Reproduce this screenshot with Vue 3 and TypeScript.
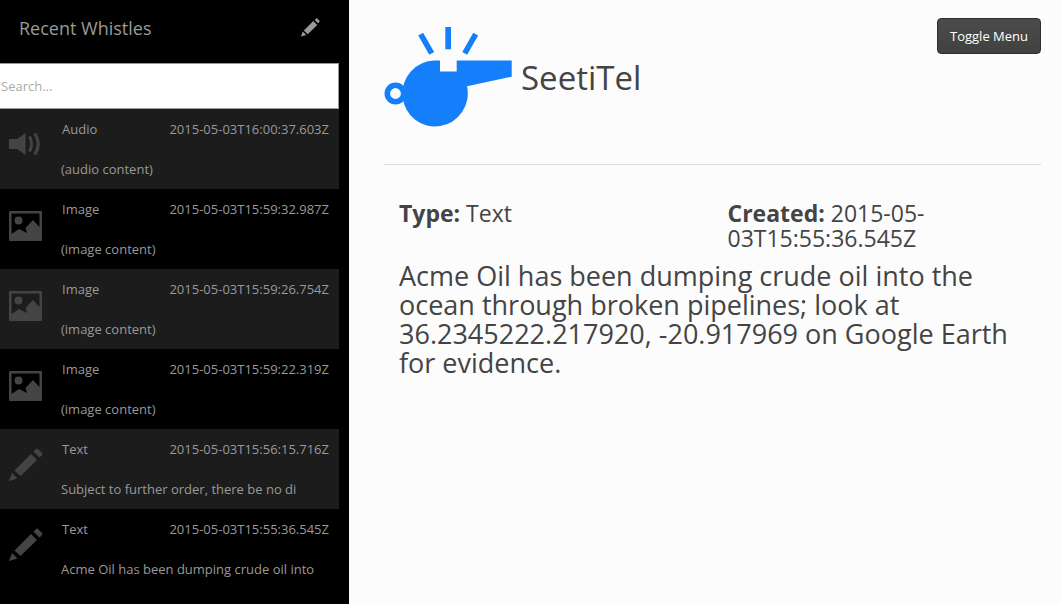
<script setup lang="ts">
import { ref, computed } from 'vue'

type Kind = 'Audio' | 'Image' | 'Text'
interface Whistle {
  kind: Kind
  created: string
  summary: string
}

const whistles: Whistle[] = [
  { kind: 'Audio', created: '2015-05-03T16:00:37.603Z', summary: '(audio content)' },
  { kind: 'Image', created: '2015-05-03T15:59:32.987Z', summary: '(image content)' },
  { kind: 'Image', created: '2015-05-03T15:59:26.754Z', summary: '(image content)' },
  { kind: 'Image', created: '2015-05-03T15:59:22.319Z', summary: '(image content)' },
  { kind: 'Text', created: '2015-05-03T15:56:15.716Z', summary: 'Subject to further order, there be no di' },
  { kind: 'Text', created: '2015-05-03T15:55:36.545Z', summary: 'Acme Oil has been dumping crude oil into' },
]

const query = ref('')
const menuOpen = ref(true)

const visible = computed(() => {
  const q = query.value.toLowerCase()
  return whistles.filter((w) => (w.kind + w.created + w.summary).toLowerCase().includes(q))
})
</script>

<template>
  <div class="page">
    <aside v-if="menuOpen" class="sidebar">
      <header class="sidebar-head">
        <h2>Recent Whistles</h2>
        <button type="button" class="compose" aria-label="New whistle">
          <svg viewBox="0 0 34 34" width="19" height="19" aria-hidden="true">
            <path d="M0 33 3 24l6.500 6.500zM5 22.500 22 5.500l7 7L12 29zM24.500 3.500 27 1q1-1 2 0l4 4q1 1 0 2L30.500 9.500z" />
          </svg>
        </button>
      </header>
      <input v-model="query" class="search" type="text" placeholder="Search..." aria-label="Search" />
      <ul class="list">
        <li v-for="w in visible" :key="w.created">
          <a href="#" class="item">
            <svg class="icon" viewBox="0 0 34 34" width="34" height="34" aria-hidden="true">
              <template v-if="w.kind === 'Audio'">
                <path d="M0 11h8l8.500-6v22l-8.500-6H0z" />
                <path class="wave" d="M20.500 8.500q4 7.500 0 15M25.500 5.500q7.500 10.500 0 21" />
              </template>
              <path
                v-else-if="w.kind === 'Image'"
                fill-rule="evenodd"
                d="M1 3h31q1 0 1 1v28q0 1-1 1H1q-1 0-1-1V4q0-1 1-1zM2.500 5.500V26l7.500-5 6 3 2 1-1.500-5L24 12l6.500 7V5.500zM9.500 8.500a4 4 0 1 1 0 8 4 4 0 0 1 0-8z"
              />
              <path
                v-else
                d="M0 33 3 25l5.500 5.500zM5.500 22.500 22 6l6 6L11.500 28zM24.500 3.500 27 1q1-1 2 0l4 4q1 1 0 2L30.500 9.500z"
              />
            </svg>
            <span class="body">
              <span class="meta">
                <span>{{ w.kind }}</span>
                <time>{{ w.created }}</time>
              </span>
              <span class="summary">{{ w.summary }}</span>
            </span>
          </a>
        </li>
      </ul>
    </aside>

    <main class="main">
      <header class="main-head">
        <div class="brand">
          <svg viewBox="0 0 128 100" width="128" height="100" aria-hidden="true">
            <g fill="#157efb">
              <path d="M50.500 33.500H56v11h16.700v-11h55v16.200L83 59.300A32.700 33 0 1 1 50.500 33.500z" />
              <path d="M61.300 0H67v22.300h-5.700z" />
            </g>
            <g fill="none" stroke="#157efb" stroke-width="5.600">
              <circle cx="11.500" cy="66.500" r="8.200" />
              <path d="M36.700 7.200 47.700 26.300M91.700 7.200 80.700 26.300" />
            </g>
          </svg>
          <h1>SeetiTel</h1>
        </div>
        <button type="button" class="toggle" @click="menuOpen = !menuOpen">Toggle Menu</button>
      </header>
      <section class="detail">
        <div class="facts">
          <h3><strong>Type:</strong> Text</h3>
          <h3><strong>Created:</strong> 2015-05-03T15:55:36.545Z</h3>
        </div>
        <p class="content">
          Acme Oil has been dumping crude oil into the ocean through broken pipelines; look at
          36.2345222.217920, -20.917969 on Google Earth for evidence.
        </p>
      </section>
    </main>
  </div>
</template>

<style>
body {
  margin: 0;
  background: #fcfcfc;
}
</style>

<style scoped>
* {
  box-sizing: border-box;
}
.page {
  display: flex;
  min-height: 100vh;
  font-family: 'Open Sans', 'Liberation Sans', sans-serif;
  font-size: 13px;
  color: #444;
}
h1,
h2,
h3,
p,
ul {
  margin: 0;
  padding: 0;
  font-weight: 400;
}
.sidebar {
  flex: 0 0 349px;
  padding-right: 10px;
  background: #000;
  color: #999;
}
.sidebar-head {
  display: flex;
  align-items: center;
  justify-content: space-between;
  height: 63px;
  padding: 0 19px 8px;
}
.sidebar-head h2 {
  font-size: 18px;
  line-height: 24px;
}
.compose {
  display: flex;
  padding: 0;
  border: 0;
  background: none;
  color: inherit;
  cursor: pointer;
}
.compose svg {
  fill: currentColor;
}
.search {
  display: block;
  width: 100%;
  height: 46px;
  padding: 0 1px;
  border: 1px solid #999;
  border-left: 0;
  border-radius: 0;
  background: #fff;
  color: #444;
  font: inherit;
}
.search::placeholder {
  color: #aaa;
}
.list {
  list-style: none;
}
.list li:nth-child(odd) {
  background: #1c1c1c;
}
.item {
  display: flex;
  gap: 18px;
  height: 80px;
  padding: 0 10px 0 9px;
  color: #999;
  line-height: 40px;
  text-decoration: none;
}
.icon {
  flex: none;
  margin-top: 19px;
  fill: #444;
}
.wave {
  fill: none;
  stroke: #444;
  stroke-width: 3;
}
.body {
  flex: 1;
  min-width: 0;
}
.meta {
  display: flex;
  justify-content: space-between;
  padding-left: 1px;
}
.summary {
  display: block;
  overflow: hidden;
  white-space: nowrap;
}
.main {
  flex: 1;
  min-width: 0;
  padding: 18px 20px 20px 35px;
}
.main-head {
  display: flex;
  align-items: flex-start;
  justify-content: space-between;
  padding-bottom: 37px;
  border-bottom: 1px solid #ddd;
}
.brand {
  display: flex;
  align-items: center;
  gap: 9px;
  padding-top: 9px;
}
.brand h1 {
  padding-top: 2px;
  font-size: 33px;
  line-height: 38px;
}
.toggle {
  height: 36px;
  padding: 0 12px;
  border: 1px solid #2f2f2f;
  border-radius: 4px;
  background: linear-gradient(#4a4c4a, #404240);
  color: #fff;
  font: inherit;
  cursor: pointer;
}
.detail {
  padding-top: 36px;
}
.facts {
  display: grid;
  grid-template-columns: 1fr 1fr;
}
.facts h3 {
  padding: 0 15px;
  font-size: 23px;
  line-height: 25px;
}
.facts strong {
  font-weight: 700;
}
.content {
  padding: 10px 15px 0;
  font-size: 27px;
  line-height: 29px;
}
</style>
